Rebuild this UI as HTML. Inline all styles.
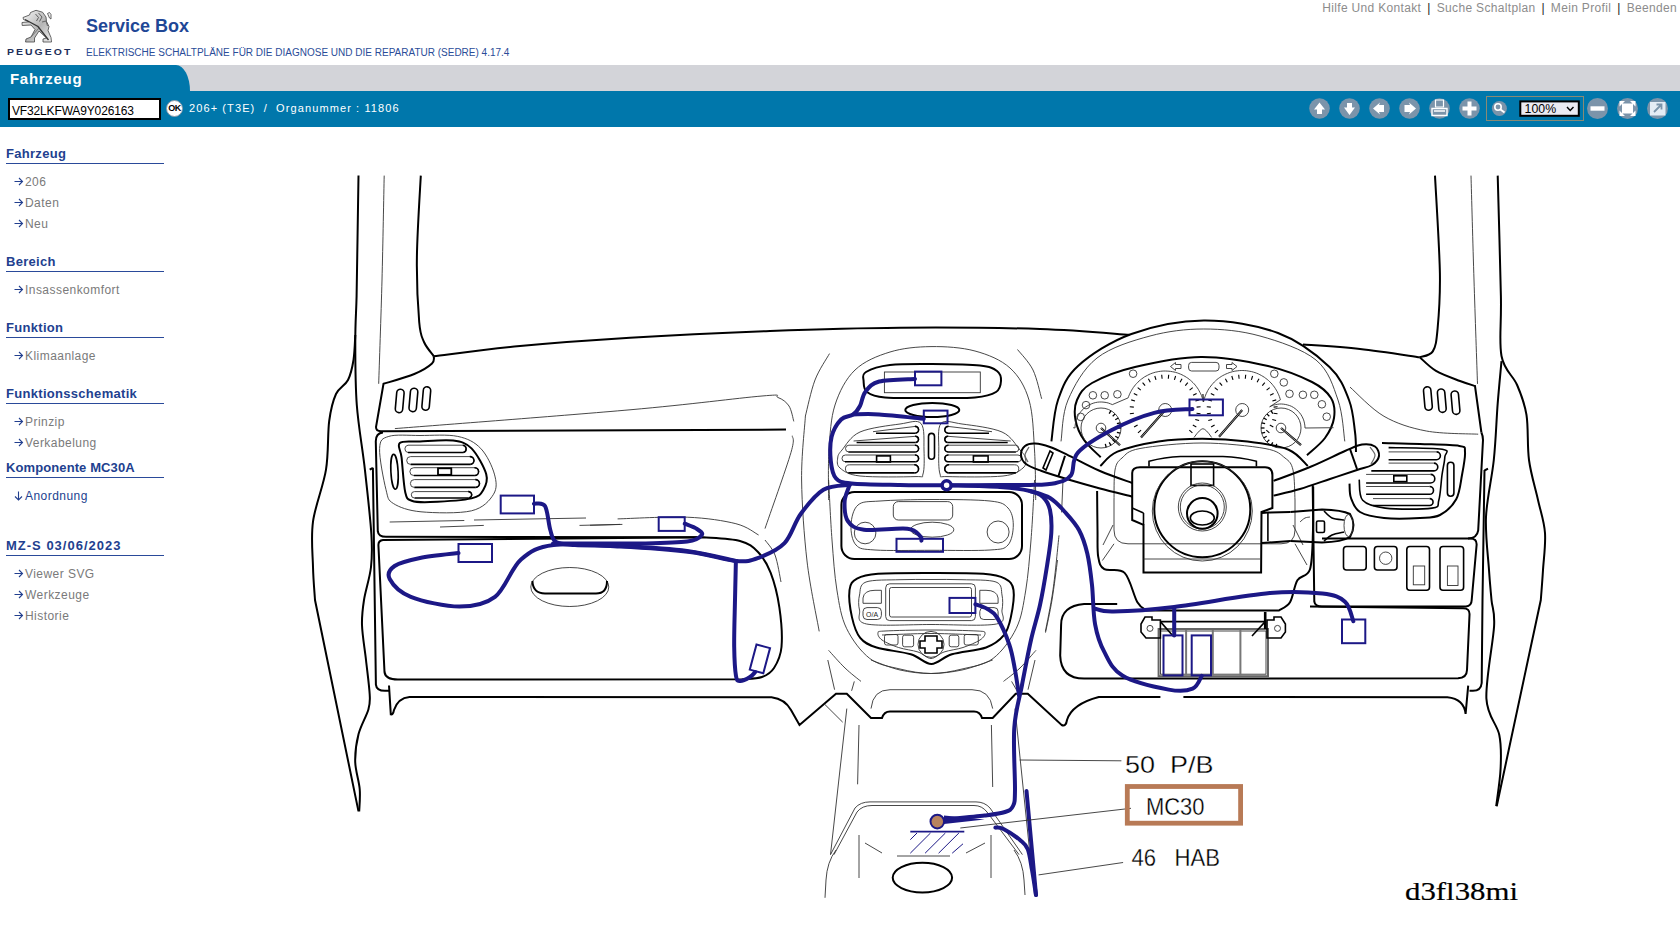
<!DOCTYPE html>
<html><head><meta charset="utf-8">
<style>
*{margin:0;padding:0;box-sizing:border-box}
html,body{width:1680px;height:925px;overflow:hidden;background:#fff;font-family:"Liberation Sans",sans-serif}
.abs{position:absolute;white-space:nowrap}
#toplinks{position:absolute;top:1px;right:3px;font-size:12px;color:#8c8c8c;letter-spacing:0.33px;line-height:15px}
#toplinks b{color:#222;font-weight:normal;margin:0 6px}
#title{left:86px;top:16px;font-size:18px;font-weight:bold;color:#1f4796}
#subtitle{left:86px;top:47px;font-size:10px;color:#2a4c98}
#peugeot{left:6.5px;top:45.5px;font-size:9.5px;font-weight:bold;color:#1e2f5a;letter-spacing:1.85px;transform:scaleX(1.1);transform-origin:0 0}
#grey{position:absolute;left:0;top:65px;width:1680px;height:26px;background:#d3d4d9}
#tab{position:absolute;left:0;top:65px;width:190px;height:26px;background:#0077ab;border-top-right-radius:14px 26px}
#tabtxt{left:10px;top:70px;font-size:15px;font-weight:bold;color:#fff;letter-spacing:0.7px}
#bar{position:absolute;left:0;top:91px;width:1680px;height:36px;background:#0077ab}
#vin{position:absolute;left:8px;top:98px;width:153px;height:22px;border:2px solid #000;background:#fff;font-size:12px;padding:4px 0 0 2px;letter-spacing:-0.15px}
#ok{position:absolute;left:166px;top:100px;width:17px;height:17px;border-radius:50%;background:#fff;border:1px solid #8899aa;font-size:9px;font-weight:bold;color:#000;text-align:center;line-height:15px;letter-spacing:-0.5px}
#organ{left:189px;top:102px;font-size:11px;color:#fff;letter-spacing:1.1px}
.side{position:absolute;left:6px;width:158px}
.sh{position:absolute;left:6px;width:158px;font-size:13px;font-weight:bold;color:#223f8f;letter-spacing:0.3px;border-bottom:1px solid #2a4a9a;height:18px;line-height:15px}
.si{position:absolute;left:14px;font-size:12px;color:#7a7a7a;letter-spacing:0.45px;line-height:14px;white-space:nowrap}
.si span{display:inline-block;width:11px;color:#223f8f;letter-spacing:0}
</style></head><body>

<svg style="position:absolute;left:0;top:0;z-index:5" width="1680" height="130">
<g fill="#7b94aa">
<circle cx="1319.5" cy="108.5" r="10.3"/><circle cx="1349.5" cy="108.5" r="10.3"/><circle cx="1379.5" cy="108.5" r="10.3"/>
<circle cx="1409.5" cy="108.5" r="10.3"/><circle cx="1439.5" cy="108.5" r="10.3"/><circle cx="1469.5" cy="108.5" r="10.3"/>
<circle cx="1499.4" cy="108.5" r="7.5"/>
<circle cx="1597.5" cy="108.5" r="10.5"/><circle cx="1627.5" cy="108.5" r="10.5"/><circle cx="1657.5" cy="108.5" r="10.5"/>
</g>
<g fill="#fff">
<path d="M1319.5,102.5 L1325,109.5 L1322,109.5 L1322,114 L1317,114 L1317,109.5 L1314,109.5 Z"/>
<path d="M1349.5,115 L1355,107.5 L1352,107.5 L1352,103 L1347,103 L1347,107.5 L1344,107.5 Z"/>
<path d="M1373,108.5 L1380,102.5 L1379,105 L1384,105 L1384,112 L1379,112 L1380,114.5 Z"/>
<path d="M1416,108.5 L1409,102.5 L1410,105 L1404.5,105 L1404.5,112 L1410,112 L1409,114.5 Z"/>
<path d="M1435.5,100 L1443.5,100 L1443.5,107 L1435.5,107 Z" fill="none" stroke="#fff" stroke-width="1.2"/>
<path d="M1432,108.5 L1447,108.5 L1447,115.5 L1432,115.5 Z" fill="none" stroke="#fff" stroke-width="1.4"/>
<path d="M1434,111 L1445,111" stroke="#fff" stroke-width="1.5"/>
<path d="M1467.5,101.5 L1471.5,101.5 L1471.5,106.5 L1476.5,106.5 L1476.5,110.5 L1471.5,110.5 L1471.5,115.5 L1467.5,115.5 L1467.5,110.5 L1462.5,110.5 L1462.5,106.5 L1467.5,106.5 Z"/>
<circle cx="1498" cy="107" r="3.2" fill="none" stroke="#fff" stroke-width="1.6"/>
<path d="M1500.5,109.5 L1504.5,112.5" stroke="#fff" stroke-width="2"/>
<rect x="1590.5" y="106.3" width="14" height="4.4"/>
<path d="M1619.5,101 L1625,101 L1622.5,103.5 L1632.5,103.5 L1630,101 L1635.5,101 L1635.5,106.5 L1633,104 L1633,113 L1635.5,110.5 L1635.5,116 L1630,116 L1632.5,113.5 L1622.5,113.5 L1625,116 L1619.5,116 L1619.5,110.5 L1622,113 L1622,104 L1619.5,106.5 Z"/>
<rect x="1650" y="102" width="15.5" height="13.5" fill="#e4ecf4"/>
</g>
<path d="M1654,112 L1661.5,104.5 M1656.5,104.5 L1661.5,104.5 L1661.5,109.5" fill="none" stroke="#7b94aa" stroke-width="1.8"/>
<rect x="1486.5" y="96.5" width="97" height="24" fill="none" stroke="#8a8a74" stroke-width="1"/>
<rect x="1520.3" y="101.4" width="58.5" height="14.4" fill="#eaeaf2" stroke="#000" stroke-width="2"/>
<text x="1524.6" y="112.8" font-family="Liberation Sans" font-size="12" fill="#000" textLength="31.5" lengthAdjust="spacingAndGlyphs">100%</text>
<path d="M1567,107 L1570.2,110.5 L1573.5,107" fill="none" stroke="#000" stroke-width="1.4"/>
<!-- lion -->
<defs><linearGradient id="lg" x1="0" y1="0" x2="1" y2="1"><stop offset="0" stop-color="#fafafa"/><stop offset="0.55" stop-color="#b5b5b5"/><stop offset="1" stop-color="#eee"/></linearGradient></defs>
<path d="M23,17.5 L29.5,15 L30.5,12.5 L36,10.3 L42.5,12.2 L46,17 L46.5,21.5 L49,26.5 L48,30.5 L51,37.5 L51.5,42 L43,42 L43,39 L46.5,38 L39,31 L34.5,38 L34.5,42 L25.5,42 L26,39 L31,37 L35,29.5 L31,25 L22.2,25.5 L22,22.5 L29,21.8 L23.5,19.5 Z" fill="url(#lg)" stroke="#444" stroke-width="0.8"/>
<path d="M47.5,13.5 L49.5,12.5 L51,14.5 L51,19 L49.5,18 Z" fill="#eee" stroke="#444" stroke-width="0.8"/>
<path d="M25,19.5 L38,26.5 L48.5,40" fill="none" stroke="#333" stroke-width="1.3"/>
<path d="M31,37 L39,28" fill="none" stroke="#666" stroke-width="0.8"/>
<path d="M35.5,14 L38.5,17.5 L36.5,21 M38.5,13 L42,17 L39.5,21.5" fill="none" stroke="#555" stroke-width="0.9"/>
<path d="M42,22 L46,21 L47.5,26" fill="none" stroke="#555" stroke-width="0.8"/>
</svg>
<div id="toplinks">Hilfe Und Kontakt<b>|</b>Suche Schaltplan<b>|</b>Mein Profil<b>|</b>Beenden</div>
<div class="abs" id="title">Service Box</div>
<div class="abs" id="subtitle">ELEKTRISCHE SCHALTPLÄNE FÜR DIE DIAGNOSE UND DIE REPARATUR (SEDRE) 4.17.4</div>
<div class="abs" id="peugeot">PEUGEOT</div>
<div id="grey"></div><div id="tab"></div>
<div class="abs" id="tabtxt">Fahrzeug</div>
<div id="bar"></div>
<div id="vin">VF32LKFWA9Y026163</div>
<div id="ok">OK</div>
<div class="abs" id="organ">206+ (T3E)&nbsp; / &nbsp;Organummer : 11806</div>

<div class="sh" style="top:146px">Fahrzeug</div>
<div class="si" style="top:175px"><span><svg width="10" height="9" style="vertical-align:0px"><path d="M0.5,4.5 L8.5,4.5 M5,1 L8.5,4.5 L5,8" fill="none" stroke="#223f8f" stroke-width="1.1"/></svg></span>206</div>
<div class="si" style="top:196px"><span><svg width="10" height="9" style="vertical-align:0px"><path d="M0.5,4.5 L8.5,4.5 M5,1 L8.5,4.5 L5,8" fill="none" stroke="#223f8f" stroke-width="1.1"/></svg></span>Daten</div>
<div class="si" style="top:217px"><span><svg width="10" height="9" style="vertical-align:0px"><path d="M0.5,4.5 L8.5,4.5 M5,1 L8.5,4.5 L5,8" fill="none" stroke="#223f8f" stroke-width="1.1"/></svg></span>Neu</div>
<div class="sh" style="top:254px">Bereich</div>
<div class="si" style="top:283px"><span><svg width="10" height="9" style="vertical-align:0px"><path d="M0.5,4.5 L8.5,4.5 M5,1 L8.5,4.5 L5,8" fill="none" stroke="#223f8f" stroke-width="1.1"/></svg></span>Insassenkomfort</div>
<div class="sh" style="top:320px">Funktion</div>
<div class="si" style="top:349px"><span><svg width="10" height="9" style="vertical-align:0px"><path d="M0.5,4.5 L8.5,4.5 M5,1 L8.5,4.5 L5,8" fill="none" stroke="#223f8f" stroke-width="1.1"/></svg></span>Klimaanlage</div>
<div class="sh" style="top:386px">Funktionsschematik</div>
<div class="si" style="top:415px"><span><svg width="10" height="9" style="vertical-align:0px"><path d="M0.5,4.5 L8.5,4.5 M5,1 L8.5,4.5 L5,8" fill="none" stroke="#223f8f" stroke-width="1.1"/></svg></span>Prinzip</div>
<div class="si" style="top:436px"><span><svg width="10" height="9" style="vertical-align:0px"><path d="M0.5,4.5 L8.5,4.5 M5,1 L8.5,4.5 L5,8" fill="none" stroke="#223f8f" stroke-width="1.1"/></svg></span>Verkabelung</div>
<div class="sh" style="top:460px;letter-spacing:0.1px">Komponente MC30A</div>
<div class="si" style="top:489px;color:#223f8f"><span><svg width="10" height="10" style="vertical-align:-1px"><path d="M4.5,0.5 L4.5,9 M1,5.5 L4.5,9 L8,5.5" fill="none" stroke="#223f8f" stroke-width="1.1"/></svg></span>Anordnung</div>
<div class="sh" style="top:538px;letter-spacing:1px">MZ-S 03/06/2023</div>
<div class="si" style="top:567px"><span><svg width="10" height="9" style="vertical-align:0px"><path d="M0.5,4.5 L8.5,4.5 M5,1 L8.5,4.5 L5,8" fill="none" stroke="#223f8f" stroke-width="1.1"/></svg></span>Viewer SVG</div>
<div class="si" style="top:588px"><span><svg width="10" height="9" style="vertical-align:0px"><path d="M0.5,4.5 L8.5,4.5 M5,1 L8.5,4.5 L5,8" fill="none" stroke="#223f8f" stroke-width="1.1"/></svg></span>Werkzeuge</div>
<div class="si" style="top:609px"><span><svg width="10" height="9" style="vertical-align:0px"><path d="M0.5,4.5 L8.5,4.5 M5,1 L8.5,4.5 L5,8" fill="none" stroke="#223f8f" stroke-width="1.1"/></svg></span>Historie</div>

<svg id="dg" width="1680" height="925" viewBox="0 0 1680 925">
<path d="M358.5,175.6C358.3,186.3 357.8,219.9 357.5,240C357.2,260.1 357,279.3 356.6,296C356.2,312.7 355.3,321.8 355.3,340C355.3,358.2 355.2,383.4 356.8,405C358.4,426.6 362.5,448.1 364.9,469.7C367.3,491.3 370.4,518.4 371.4,534.6C372.4,550.8 372.2,556.1 371,567C369.8,577.9 365.5,590.3 364,600C362.5,609.7 361.7,615 362,625C362.3,635 364.7,648.4 366,660C367.3,671.6 369.3,686.2 369.7,694.5C370.1,702.8 370.3,702.9 368.4,709.5C366.5,716.1 360.7,725.6 358.5,734.3C356.3,743 355,752.6 355.2,761.7C355.4,770.8 359,780.7 359.7,789C360.4,797.3 359.3,807.7 359.2,811.4" fill="none" stroke="#000" stroke-width="2"/>
<path d="M355.3,335C355,339.2 354.7,352.5 353.5,360C352.3,367.5 350.9,374.3 348,380C345.1,385.7 339.1,387.2 336,394C332.9,400.8 330.9,408.4 329.2,421C327.5,433.6 328.7,452.9 326,469.7C323.3,486.5 315.2,505.4 313,521.6C310.8,537.8 312.7,553.9 313,567C313.3,580.1 314.7,594.5 315,600L358.5,811.4" fill="none" stroke="#000" stroke-width="2"/>
<path d="M384.2,175.6C383.8,193 382.9,245.3 382,280C381.1,314.7 379.2,366.5 378.7,383.8" fill="none" stroke="#333" stroke-width="0.9"/>
<path d="M420.8,175.6C420.1,189.2 417.2,232.9 416.9,257.3C416.6,281.7 418,307.9 419.2,322C420.4,336.1 421.6,336.3 424,342C426.4,347.7 432.2,353.8 433.8,356.2" fill="none" stroke="#000" stroke-width="2"/>
<path d="M433.8,356.2C448.2,354.5 487.3,349.1 520,346C552.7,342.9 588.3,340.2 630,337.7C671.7,335.2 725,332.7 770,331C815,329.3 855,328 900,327.7C945,327.4 1001.8,327.8 1040,329C1078.2,330.2 1114.6,333.8 1129.5,334.8" fill="none" stroke="#000" stroke-width="2"/>
<path d="M433.8,356.2C433.5,357.4 435.2,360.5 432,363.5C428.8,366.5 422.4,370.6 414.3,374C406.2,377.4 388.6,382.2 383.5,383.8 L376,427 Q376,431.2 381,431.2 L786,429.6" fill="none" stroke="#000" stroke-width="2"/>
<path d="M394.9,428.6C434.1,425.5 568.8,415.2 630,409.8C691.2,404.4 737.3,398.1 762,396C786.7,393.9 773.5,395.8 778,397.5C782.5,399.2 786.4,402 789,406C791.6,410 793,418.8 793.8,421.4" fill="none" stroke="#333" stroke-width="0.9"/>
<path d="M792.3,435.7C792.1,438.5 795.5,436.9 791,452.4C786.5,467.9 769.3,515.9 765,528.6" fill="none" stroke="#333" stroke-width="0.9"/>
<rect x="396" y="389.2" width="7.4" height="23.5" rx="3.7" fill="none" stroke="#000" stroke-width="1.6" transform="rotate(5 399.7 401)"/>
<rect x="409.7" y="388.2" width="7.4" height="23.5" rx="3.7" fill="none" stroke="#000" stroke-width="1.6" transform="rotate(5 413.4 400)"/>
<rect x="422.6" y="386.8" width="7.4" height="23.5" rx="3.7" fill="none" stroke="#000" stroke-width="1.6" transform="rotate(5 426.3 398.5)"/>
<path d="M383,432.5 Q375.5,433 375.8,442 L377.8,531.4 Q378.5,536.8 386,536.8 L697,537.3" fill="none" stroke="#000" stroke-width="2"/>
<path d="M379.6,448.4C380.1,439.5 382.1,438.5 388.8,436.4C395.5,434.2 408.5,435.5 420,435.5C431.5,435.5 447.6,434.2 457.7,436.4C467.8,438.5 474.6,442.1 480.7,448.4C486.8,454.7 492.3,466.5 494.4,474.1C496.5,481.8 497.3,488.2 493.5,494.3C489.7,500.4 483.6,507.9 471.5,510.8C459.4,513.7 434,513 421,511.8C408,510.6 399.2,507.2 393.4,503.5C387.6,499.8 388.3,498.9 386,489.7C383.7,480.5 379.1,457.3 379.6,448.4Z" fill="none" stroke="#333" stroke-width="0.9"/>
<path d="M399.8,442.9C402.9,440.2 411.1,441.9 420,441.5C428.9,441.1 444.5,439.5 453.1,440.6C461.7,441.8 466,442.8 471.5,448.4C477,454 484.2,467.2 486.2,474.1C488.2,481 485.8,485.6 483.4,489.7C480.9,493.8 480.4,496.3 471.5,498.4C462.6,500.5 440.1,501.7 430.1,502.1C420.1,502.5 415.8,502.3 411.7,500.7C407.6,499.1 407,499.7 405.3,492.5C403.6,485.3 402.5,465.9 401.6,457.6C400.7,449.3 396.7,445.6 399.8,442.9Z" fill="none" stroke="#000" stroke-width="2"/>
<path d="M408,445.2 L463.2,445.2 A3.7,3.7 0 0 1 463.2,452.5" fill="none" stroke="#333" stroke-width="0.9"/>
<path d="M408,452.5 A3.7,3.7 0 0 1 408,445.2" fill="none" stroke="#333" stroke-width="0.9"/>
<path d="M408,452.5 L463.2,452.5" fill="none" stroke="#000" stroke-width="1.6"/>
<path d="M463.2,452.5 A3.7,3.7 0 0 0 462.8,445.2" fill="none" stroke="#000" stroke-width="1.6"/>
<path d="M410.6,456.6 L470.3,456.6 A3.9,3.9 0 0 1 470.3,464.4" fill="none" stroke="#333" stroke-width="0.9"/>
<path d="M410.6,464.4 A3.9,3.9 0 0 1 410.6,456.6" fill="none" stroke="#333" stroke-width="0.9"/>
<path d="M410.6,464.4 L470.3,464.4" fill="none" stroke="#000" stroke-width="1.6"/>
<path d="M470.3,464.4 A3.9,3.9 0 0 0 469.8,456.6" fill="none" stroke="#000" stroke-width="1.6"/>
<path d="M413.8,467.7 L474.9,467.7 A3.9,3.9 0 0 1 474.9,475.5" fill="none" stroke="#333" stroke-width="0.9"/>
<path d="M413.8,475.5 A3.9,3.9 0 0 1 413.8,467.7" fill="none" stroke="#333" stroke-width="0.9"/>
<path d="M413.8,475.5 L474.9,475.5" fill="none" stroke="#000" stroke-width="1.6"/>
<path d="M474.9,475.5 A3.9,3.9 0 0 0 474.4,467.7" fill="none" stroke="#000" stroke-width="1.6"/>
<path d="M414.3,479.6 L475.8,479.6 A3.9,3.9 0 0 1 475.8,487.4" fill="none" stroke="#333" stroke-width="0.9"/>
<path d="M414.3,487.4 A3.9,3.9 0 0 1 414.3,479.6" fill="none" stroke="#333" stroke-width="0.9"/>
<path d="M414.3,487.4 L475.8,487.4" fill="none" stroke="#000" stroke-width="1.6"/>
<path d="M475.8,487.4 A3.9,3.9 0 0 0 475.3,479.6" fill="none" stroke="#000" stroke-width="1.6"/>
<path d="M414.5,491.6 L468.7,491.6 A3.2,3.2 0 0 1 468.7,498" fill="none" stroke="#333" stroke-width="0.9"/>
<path d="M414.5,498 A3.2,3.2 0 0 1 414.5,491.6" fill="none" stroke="#333" stroke-width="0.9"/>
<path d="M414.5,498 L468.7,498" fill="none" stroke="#000" stroke-width="1.6"/>
<path d="M468.7,498 A3.2,3.2 0 0 0 468.2,491.6" fill="none" stroke="#000" stroke-width="1.6"/>
<rect x="438" y="468.3" width="13.3" height="6.5" rx="0" fill="#fff" stroke="#000" stroke-width="1.8"/>
<ellipse cx="394.5" cy="471.8" rx="3.6" ry="17.4" fill="none" stroke="#000" stroke-width="1.6" transform="rotate(-3 394.5 471.8)"/>
<path d="M389.7,522 L464.3,520.5" fill="none" stroke="#333" stroke-width="0.9"/>
<path d="M440,527 L483.8,525.4" fill="none" stroke="#333" stroke-width="0.9"/>
<path d="M474,520 L586,518" fill="none" stroke="#333" stroke-width="0.9"/>
<path d="M579.5,525.4 L620,524.4" fill="none" stroke="#333" stroke-width="0.9"/>
<path d="M590,525.3 L622.4,524.4" fill="none" stroke="#333" stroke-width="0.9"/>
<path d="M617.6,518.9C629.2,518.6 667.5,516.4 687.2,517.2C706.9,518 724,520.7 735.9,523.7C747.8,526.7 754.8,533.1 758.6,535" fill="none" stroke="#333" stroke-width="0.9"/>
<path d="M378.4,545 L384.5,672 Q385.5,679.5 397.8,679.5 L742.4,679.3 C745.7,678.9 756.7,678.9 762,677C767.3,675.1 770.8,673 774,668C777.2,663 780.6,657.1 781.5,647C782.4,636.9 781.2,620 779.4,607.6C777.6,595.2 774.2,581.9 770.6,572.6C767,563.3 763.1,557.3 758,552C752.9,546.7 749.1,543.5 740,541C730.9,538.5 709.6,537.9 703.5,537.3 L383,540 Q378.4,540.5 378.4,545" fill="none" stroke="#000" stroke-width="2"/>
<path d="M765,540C766.7,542.5 772.3,548 775,555C777.7,562 780,577.5 781,582" fill="none" stroke="#333" stroke-width="0.9"/>
<path d="M369.7,469.7 L372.9,467.8 M372.9,467.8 L375.9,684.6 Q376.5,690.8 385,690.8 L389,690.8" fill="none" stroke="#000" stroke-width="2"/>
<path d="M389,685.5 L390.8,714.4 Q393,715 394,710 Q398,698 409.5,697 L771.5,697.2 Q785,699 791,710 L799.5,724.9 L836,693.8 L846.8,693.8 L871,718 L882,718 Q884,711.4 890,711.4 L974,711.4 Q980,711.4 982,718 L992.7,718 L1015.7,693.8 L1027.8,693.8 L1061.6,725 Q1066,727 1067,720 Q1072,704 1098.8,697 L1160.4,697 M1183.4,697 L1447.4,697.3 Q1464,699 1465.6,714 L1468.2,685.6" fill="none" stroke="#000" stroke-width="2"/>
<ellipse cx="569.8" cy="587" rx="39" ry="19.5" fill="none" stroke="#333" stroke-width="0.9" transform="rotate(0 569.8 587)"/>
<path d="M532.4,581 Q533,593.5 545,593.5 L596,593.5 Q607,593.5 607,581" fill="none" stroke="#000" stroke-width="2"/>
<path d="M829.5,353.6C827.1,358 819,369.6 815,380C811,390.4 807,410 805.4,416" fill="none" stroke="#333" stroke-width="0.9"/>
<path d="M1017.5,349.5C1020.1,352.9 1029,361.8 1033,370C1037,378.2 1040.2,394 1041.7,398.8" fill="none" stroke="#333" stroke-width="0.9"/>
<path d="M828.6,500C828.7,491.7 827.9,465.8 829,450C830.1,434.2 830.7,418.3 835,405C839.3,391.7 845.8,378.8 855,370C864.2,361.2 877.3,355.9 890,352C902.7,348.1 916.8,346.8 931,346.6C945.2,346.4 961.8,347.4 975,351C988.2,354.6 1001,359.8 1010,368C1019,376.2 1024.9,386.3 1029,400C1033.1,413.7 1033.4,433.3 1034.5,450C1035.6,466.7 1035.5,491.7 1035.7,500" fill="none" stroke="#333" stroke-width="0.9"/>
<path d="M866,372C870.4,369.3 879,366.3 890,365C901,363.7 917,363.9 932,364C947,364.1 969.2,364.3 980,365.5C990.8,366.7 993.5,368.4 997,371C1000.5,373.6 1001.2,377.5 1001,381C1000.8,384.5 1000.3,389.2 996,392C991.7,394.8 985.7,396.5 975,397.5C964.3,398.5 947,397.9 932,397.9C917,397.9 895.8,398.5 885,397.5C874.2,396.5 870.6,394.8 867,392C863.4,389.2 863.8,384.3 863.6,381C863.4,377.7 861.6,374.7 866,372Z" fill="none" stroke="#000" stroke-width="2"/>
<rect x="884.4" y="372" width="95.9" height="20.7" rx="0" fill="none" stroke="#333" stroke-width="0.9"/>
<ellipse cx="932.3" cy="410" rx="27" ry="7" fill="none" stroke="#000" stroke-width="2" transform="rotate(0 932.3 410)"/>
<path d="M842,450C845.7,445.7 850.3,436.3 860,432C869.7,427.7 889.8,425.4 900,424C910.2,422.6 917,419.2 921,423.5C925,427.8 923.7,441.6 924,450C924.3,458.4 924.5,469.6 923,474C921.5,478.4 925.5,476.3 915,476.6C904.5,476.9 872.5,477.4 860,476C847.5,474.6 843.7,471 840,468C836.3,465 837.4,461 837.7,458C838,455 838.3,454.3 842,450Z" fill="none" stroke="#333" stroke-width="0.9"/>
<path d="M1020,450C1016.1,445.7 1011.7,436.3 1002,432C992.3,427.7 972.2,425.4 962,424C951.8,422.6 944.9,419.2 941,423.5C937.1,427.8 939,441.6 938.8,450C938.6,458.4 938.5,469.6 940,474C941.5,478.4 937.5,476.3 948,476.6C958.5,476.9 990.5,477.4 1003,476C1015.5,474.6 1019.3,471 1023,468C1026.7,465 1025.8,461 1025.3,458C1024.8,455 1023.9,454.3 1020,450Z" fill="none" stroke="#333" stroke-width="0.9"/>
<path d="M873,431.7 L915.4,426.4 A3.4,3.4 0 0 1 915.4,433.2" fill="none" stroke="#333" stroke-width="0.9"/>
<path d="M876,433.2 L915.4,433.2" fill="none" stroke="#000" stroke-width="1.6"/>
<path d="M915.4,433.2 A3.4,3.4 0 0 0 914.9,426.4" fill="none" stroke="#000" stroke-width="1.6"/>
<path d="M853.6,441 L915.6,436.3 A3.1,3.1 0 0 1 915.6,442.5" fill="none" stroke="#333" stroke-width="0.9"/>
<path d="M856.6,442.5 L915.6,442.5" fill="none" stroke="#000" stroke-width="1.6"/>
<path d="M915.6,442.5 A3.1,3.1 0 0 0 915.1,436.3" fill="none" stroke="#000" stroke-width="1.6"/>
<path d="M848.9,445.2 L915.4,445.2 A3.4,3.4 0 0 1 915.4,452" fill="none" stroke="#333" stroke-width="0.9"/>
<path d="M848.9,445.2 A3.4,3.4 0 0 0 848.9,452" fill="none" stroke="#333" stroke-width="0.9"/>
<path d="M848.5,452 L915.4,452" fill="none" stroke="#000" stroke-width="1.6"/>
<path d="M915.4,452 A3.4,3.4 0 0 0 914.9,445.2" fill="none" stroke="#000" stroke-width="1.6"/>
<path d="M845.4,455 L915.4,455 A3.4,3.4 0 0 1 915.4,461.8" fill="none" stroke="#333" stroke-width="0.9"/>
<path d="M845.4,455 A3.4,3.4 0 0 0 845.4,461.8" fill="none" stroke="#333" stroke-width="0.9"/>
<path d="M845,461.8 L915.4,461.8" fill="none" stroke="#000" stroke-width="1.6"/>
<path d="M915.4,461.8 A3.4,3.4 0 0 0 914.9,455" fill="none" stroke="#000" stroke-width="1.6"/>
<path d="M849.5,464.8 L914.7,464.8 A4,4 0 0 1 914.7,472.9" fill="none" stroke="#333" stroke-width="0.9"/>
<path d="M849.5,464.8 A4,4 0 0 0 849.5,472.9" fill="none" stroke="#333" stroke-width="0.9"/>
<path d="M848.5,472.9 L914.7,472.9" fill="none" stroke="#000" stroke-width="1.6"/>
<path d="M914.7,472.9 A4,4 0 0 0 914.2,464.8" fill="none" stroke="#000" stroke-width="1.6"/>
<path d="M992,431.7 L948,426.4 A3.4,3.4 0 0 0 948,433.2" fill="none" stroke="#333" stroke-width="0.9"/>
<path d="M948,433.2 L989,433.2" fill="none" stroke="#000" stroke-width="1.6"/>
<path d="M948,433.2 A3.4,3.4 0 0 1 948.5,426.4" fill="none" stroke="#000" stroke-width="1.6"/>
<path d="M1010.7,441 L947.7,436.3 A3.1,3.1 0 0 0 947.7,442.5" fill="none" stroke="#333" stroke-width="0.9"/>
<path d="M947.7,442.5 L1007.7,442.5" fill="none" stroke="#000" stroke-width="1.6"/>
<path d="M947.7,442.5 A3.1,3.1 0 0 1 948.2,436.3" fill="none" stroke="#000" stroke-width="1.6"/>
<path d="M948,445.2 L1015.4,445.2 A3.4,3.4 0 0 1 1015.4,452" fill="none" stroke="#333" stroke-width="0.9"/>
<path d="M948,445.2 A3.4,3.4 0 0 0 948,452" fill="none" stroke="#333" stroke-width="0.9"/>
<path d="M948,452 L1015.8,452" fill="none" stroke="#000" stroke-width="1.6"/>
<path d="M948,452 A3.4,3.4 0 0 1 948.5,445.2" fill="none" stroke="#000" stroke-width="1.6"/>
<path d="M948,455 L1018,455 A3.4,3.4 0 0 1 1018,461.8" fill="none" stroke="#333" stroke-width="0.9"/>
<path d="M948,455 A3.4,3.4 0 0 0 948,461.8" fill="none" stroke="#333" stroke-width="0.9"/>
<path d="M948,461.8 L1018.4,461.8" fill="none" stroke="#000" stroke-width="1.6"/>
<path d="M948,461.8 A3.4,3.4 0 0 1 948.5,455" fill="none" stroke="#000" stroke-width="1.6"/>
<path d="M948.6,464.8 L1014.7,464.8 A4,4 0 0 1 1014.7,472.9" fill="none" stroke="#333" stroke-width="0.9"/>
<path d="M948.6,464.8 A4,4 0 0 0 948.6,472.9" fill="none" stroke="#333" stroke-width="0.9"/>
<path d="M948.6,472.9 L1015.8,472.9" fill="none" stroke="#000" stroke-width="1.6"/>
<path d="M948.6,472.9 A4,4 0 0 1 949.1,464.8" fill="none" stroke="#000" stroke-width="1.6"/>
<rect x="876.6" y="455.9" width="13.8" height="6.1" rx="0" fill="none" stroke="#000" stroke-width="1.6"/>
<rect x="973.4" y="455.9" width="14.7" height="6.1" rx="0" fill="none" stroke="#000" stroke-width="1.6"/>
<rect x="928.5" y="433.4" width="6" height="25.9" rx="3" fill="none" stroke="#000" stroke-width="1.6"/>
<rect x="841.4" y="491.9" width="180.6" height="67.1" rx="13" fill="none" stroke="#000" stroke-width="2"/>
<path d="M858,505C862.8,501 867.7,501.9 880,501C892.3,500.1 913.7,499.5 932,499.5C950.3,499.5 977.3,499.6 990,501C1002.7,502.4 1004.1,504 1008,508C1011.9,512 1013.3,518.8 1013.3,525C1013.3,531.2 1011.9,540.8 1008,545C1004.1,549.2 1002.7,549.1 990,550C977.3,550.9 951.2,550.3 932,550.3C912.8,550.3 887.7,550.9 875,550C862.3,549.1 860,549.2 856,545C852,540.8 850.7,531.7 851,525C851.3,518.3 853.2,509 858,505Z" fill="none" stroke="#333" stroke-width="0.9"/>
<rect x="893.3" y="501.6" width="59.4" height="18.4" rx="5" fill="none" stroke="#333" stroke-width="0.9"/>
<ellipse cx="932.2" cy="529.7" rx="21.6" ry="7.5" fill="none" stroke="#333" stroke-width="0.9" transform="rotate(0 932.2 529.7)"/>
<circle cx="865.1" cy="533" r="10.8" fill="none" stroke="#333" stroke-width="0.9"/>
<circle cx="998.1" cy="532" r="11" fill="none" stroke="#333" stroke-width="0.9"/>
<path d="M849.5,590C848.7,596.5 850.2,609.4 852,617.4C853.8,625.4 856.1,632.9 860.2,637.9C864.3,642.9 868.2,644.8 876.6,647.5C885,650.2 901.7,651.5 910.8,654.3C919.9,657 924.5,664 931.4,664C938.2,664 942.8,657 951.9,654.3C961,651.5 977.4,650.7 986.1,647.5C994.8,644.3 999.8,640.2 1003.9,635.2C1008,630.2 1009.2,624.9 1010.8,617.4C1012.4,609.9 1014.5,596.5 1013.5,590C1012.5,583.5 1010,581.3 1005,578.6C1000,575.9 995.7,574.7 983.4,573.8C971.1,572.9 948.6,573 931,573C913.4,573 890.3,572.9 878,573.8C865.7,574.7 861.8,575.9 857,578.6C852.2,581.3 850.3,583.5 849.5,590Z" fill="none" stroke="#000" stroke-width="2"/>
<path d="M866,582C872.8,579.5 889.2,580.1 900,579.7C910.8,579.3 920.7,579.5 931,579.5C941.3,579.5 951.2,579.3 962,579.7C972.8,580.1 989.3,579.5 996,582C1002.7,584.5 1001,590.3 1002,595C1003,599.7 1002.9,605.2 1002,610C1001.1,614.8 1008.2,621.6 996.4,624C984.6,626.4 952.6,624.5 931,624.5C909.4,624.5 878.5,626.4 866.6,624C854.7,621.6 860.7,614.8 859.5,610C858.3,605.2 858.4,599.7 859.5,595C860.6,590.3 859.2,584.5 866,582Z" fill="none" stroke="#333" stroke-width="0.9"/>
<rect x="885.7" y="583.8" width="89.7" height="36.8" rx="4" fill="none" stroke="#333" stroke-width="0.9"/>
<rect x="889.5" y="587.5" width="82" height="29.5" rx="2" fill="none" stroke="#333" stroke-width="0.9"/>
<path d="M863,603.3 L863,598 Q864,590.3 875,590.3 L881.4,590.3 L881.4,603.3 Z" fill="none" stroke="#333" stroke-width="0.9"/>
<rect x="863" y="607.6" width="18.4" height="11.9" rx="4" fill="none" stroke="#333" stroke-width="0.9"/>
<path d="M998.1,603.3 L998.1,598 Q997,590.3 986,590.3 L979.8,590.3 L979.8,603.3 Z" fill="none" stroke="#333" stroke-width="0.9"/>
<rect x="979.8" y="607.6" width="18.3" height="11.9" rx="4" fill="none" stroke="#333" stroke-width="0.9"/>
<text x="866" y="617" font-family="Liberation Sans" font-size="7" fill="#222">O/A</text>
<path d="M878,633C878.5,631.5 876.2,631.5 885,631C893.8,630.5 915.7,630 931,630C946.3,630 968,630.5 977,631C986,631.5 984.5,631.5 985,633C985.5,634.5 983.7,637.6 980,640C976.3,642.4 969,645.5 963,647.5C957,649.5 949.3,650.2 944,652C938.7,653.8 935.3,658.5 931,658.5C926.7,658.5 923.4,653.8 918,652C912.6,650.2 904.5,649.5 898.5,647.5C892.5,645.5 885.4,642.4 882,640C878.6,637.6 877.5,634.5 878,633Z" fill="none" stroke="#333" stroke-width="0.9"/>
<path d="M882,635C890.2,634.8 914.5,633.5 931,633.5C947.5,633.5 972.7,634.8 981,635" fill="none" stroke="#333" stroke-width="0.9"/>
<circle cx="931" cy="644.4" r="13" fill="none" stroke="#333" stroke-width="0.9"/>
<path d="M925,636 L937,636 L937,641 L942,641 L942,648 L937,648 L937,653 L925,653 L925,648 L920,648 L920,641 L925,641 Z" fill="none" stroke="#000" stroke-width="1.6"/>
<rect x="884.5" y="634.5" width="13.5" height="10.5" rx="2" fill="none" stroke="#333" stroke-width="0.9"/>
<rect x="902.6" y="635.2" width="11" height="11.6" rx="2" fill="none" stroke="#333" stroke-width="0.9"/>
<rect x="949.2" y="635.2" width="9.6" height="11.6" rx="2" fill="none" stroke="#333" stroke-width="0.9"/>
<rect x="964.2" y="634.5" width="14.1" height="10.5" rx="2" fill="none" stroke="#333" stroke-width="0.9"/>
<path d="M828.6,480C829.2,490 830.6,521.7 832,540C833.4,558.3 834.5,575.3 836.9,590C839.3,604.7 841,616.9 846.5,628.3C852,639.7 860.9,651.7 869.8,658.5C878.7,665.3 889.7,666.5 900,669C910.3,671.5 921.1,673.5 931.4,673.5C941.7,673.5 951.7,671.5 962,669C972.3,666.5 984,665.3 993,658.5C1002,651.7 1010.8,639.7 1016.3,628.3C1021.8,616.9 1023.3,604.7 1025.8,590C1028.2,575.3 1029.5,558.3 1031,540C1032.5,521.7 1034,490 1034.6,480" fill="none" stroke="#333" stroke-width="0.9"/>
<path d="M828.6,650.3C831.3,653.2 839.6,662.8 845,668C850.4,673.2 858.3,679.2 861,681.4" fill="none" stroke="#333" stroke-width="0.9"/>
<path d="M1036,650.3C1033.3,653.2 1025.4,662.8 1020,668C1014.6,673.2 1006.2,679.2 1003.5,681.4" fill="none" stroke="#333" stroke-width="0.9"/>
<path d="M805.4,416C804.8,426.7 801.3,455.8 801.6,480C801.9,504.2 804.1,535.8 807,561C809.9,586.2 817.2,619.7 819.2,631.4" fill="none" stroke="#333" stroke-width="0.9"/>
<path d="M1063,480 L1061.6,512.4" fill="none" stroke="#333" stroke-width="0.9"/>
<path d="M1059,535.4C1058,544.5 1055.3,574 1053,590C1050.7,606 1046.7,624.5 1045.4,631.4" fill="none" stroke="#333" stroke-width="0.9"/>
<path d="M871,660C875.8,661.7 890.1,667.8 900,670C909.9,672.2 920.2,673.5 930.5,673.5C940.8,673.5 951.6,672.2 962,670C972.4,667.8 987.6,661.7 992.7,660" fill="none" stroke="#333" stroke-width="0.9"/>
<path d="M827.8,660 L834.6,689.7M854.3,681.4 L851.6,690.8M1011.6,681.4 L1017,690.8" fill="none" stroke="#333" stroke-width="0.9"/>
<path d="M1035,660 L1028,689.7" fill="none" stroke="#333" stroke-width="0.9"/>
<path d="M825,704.6 L842.7,722.2" fill="none" stroke="#333" stroke-width="0.9"/>
<path d="M846.8,708.6 L830.5,854.6" fill="none" stroke="#333" stroke-width="0.9"/>
<path d="M1015,708.6 L1030,854.6" fill="none" stroke="#333" stroke-width="0.9"/>
<path d="M871,708.6 Q873,689.7 890,689.7 L972,689.7 Q990,689.7 992.7,708.6" fill="none" stroke="#333" stroke-width="0.9"/>
<path d="M859,725 L857.6,784.3" fill="none" stroke="#333" stroke-width="0.9"/>
<path d="M991.4,725 L992.7,787" fill="none" stroke="#333" stroke-width="0.9"/>
<path d="M830.5,854.6 L855,808 Q860.3,801.9 870,801.9 L976,801.9 Q984.6,801.9 990,808 L1022.4,854.6" fill="none" stroke="#333" stroke-width="0.9"/>
<path d="M834,854.6 L857,812 Q862,805.5 872,805.5 L974,805.5 Q982,805.5 987,812 L1019,854.6" fill="none" stroke="#333" stroke-width="0.9"/>
<path d="M825,897.8 L826,880 Q827,862 836,850 M1025,895 L1024,880 Q1023,862 1014,850" fill="none" stroke="#333" stroke-width="0.9"/>
<path d="M859,835 L859,878M991,835 L991,878" fill="none" stroke="#333" stroke-width="0.9"/>
<path d="M865,843 L882,853M897,856 L950,856M966,853 L985,843" fill="none" stroke="#333" stroke-width="0.9"/>
<ellipse cx="922.4" cy="877.6" rx="29.7" ry="14.9" fill="none" stroke="#000" stroke-width="2" transform="rotate(0 922.4 877.6)"/>
<path d="M1051.4,441.4C1052.5,434.5 1053.6,412.6 1058,400C1062.4,387.4 1065.8,377 1078,366C1090.2,355 1110.4,341.6 1131.4,334C1152.4,326.4 1179.4,320.7 1203.8,320.5C1228.2,320.3 1257,325.2 1278,333C1299,340.8 1317.7,355.8 1329.5,367C1341.3,378.2 1344.8,389.2 1349,400C1353.2,410.8 1353.8,423.3 1355,432C1356.2,440.7 1355.8,448.7 1356,452" fill="none" stroke="#000" stroke-width="2"/>
<path d="M1061,441.4C1062.2,434.5 1062,413.9 1068,400C1074,386.1 1083.3,368.7 1097,358C1110.7,347.3 1132.2,340.8 1150,336C1167.8,331.2 1185.5,329 1203.8,329C1222.1,329 1241.3,330.8 1260,336C1278.7,341.2 1303,349.3 1316,360C1329,370.7 1333.2,386.4 1338,400C1342.8,413.6 1343.7,434.5 1344.8,441.4" fill="none" stroke="#333" stroke-width="0.9"/>
<path d="M1100.7,457.2C1097.9,454.3 1088.2,446.2 1084,440C1079.8,433.8 1076.7,426.7 1075.5,420C1074.3,413.3 1074.2,406.2 1077,400C1079.8,393.8 1082.3,388.5 1092,383C1101.7,377.5 1116.8,371.3 1135,367C1153.2,362.7 1178.8,357.2 1201,357C1223.2,356.8 1249.5,361.8 1268,366C1286.5,370.2 1301.5,376.7 1312,382C1322.5,387.3 1327.3,392 1331,398C1334.7,404 1335,411.3 1334,418C1333,424.7 1329.5,431.8 1325,438C1320.5,444.2 1310,452.3 1307,455.2" fill="none" stroke="#000" stroke-width="2"/>
<path d="M1073.2,427.7 L1075,428 L1075.1,425.8 L1075.4,423.6 L1075.8,421.5 L1076.5,419.4 L1077.3,417.4 L1078.3,415.4 L1079.4,413.5 L1080.7,411.8 L1082.1,410.1 L1083.7,408.6 L1085.4,407.2 L1087.2,406 L1089.1,404.9 L1091.1,404 L1093.2,403.2 L1095.3,402.6 L1097.5,402.2 L1099.6,402 L1101.8,402 L1104,402.2 L1106.2,402.5 L1108.3,403 L1110.4,403.8 L1112.4,404.6 L1128.1,397.9 L1128.7,396.3 L1129.3,394.8 L1130,393.2 L1130.8,391.7 L1131.6,390.2 L1132.5,388.8 L1133.4,387.4 L1134.5,386 L1135.5,384.7 L1136.7,383.4 L1137.9,382.2 L1139.1,381 L1140.4,379.9 L1141.7,378.9 L1143.1,377.9 L1144.5,376.9 L1146,376.1 L1147.5,375.3 L1149,374.5 L1150.6,373.8 L1152.2,373.2 L1153.8,372.7 L1155.4,372.2 L1157.1,371.9 L1158.8,371.5 L1160.4,371.3 L1162.1,371.1 L1163.8,371 L1165.5,371 L1167.2,371.1 L1168.9,371.2 L1170.6,371.4 L1172.3,371.7 L1174,372 L1175.6,372.4 L1177.3,372.9 L1178.9,373.5 L1180.4,374.1 L1182,374.8 L1183.5,375.6 L1185,376.4 L1186.4,377.3 L1187.8,378.2 L1189.2,379.3 L1190.5,380.3 L1191.8,381.5 L1193,382.7 L1194.2,383.9 L1195.3,385.2 L1196.3,386.5 L1197.3,387.9 L1198.3,389.3 L1199.1,390.8 L1199.9,392.3 L1200.7,393.8 L1201.4,395.4 L1202,397 L1202.5,398.6 L1203,400.2 L1203.3,401.9 L1202.9,394 L1203.6,401.8 L1204,400.1 L1204.4,398.4 L1205,396.7 L1205.6,395.1 L1206.3,393.5 L1207.1,391.9 L1207.9,390.3 L1208.8,388.8 L1209.8,387.4 L1210.9,386 L1212,384.6 L1213.1,383.3 L1214.3,382 L1215.6,380.8 L1216.9,379.6 L1218.3,378.5 L1219.7,377.5 L1221.2,376.5 L1222.7,375.6 L1224.3,374.8 L1225.9,374 L1227.5,373.4 L1229.1,372.7 L1230.8,372.2 L1232.5,371.7 L1234.2,371.3 L1235.9,371 L1237.7,370.8 L1239.4,370.6 L1241.2,370.5 L1242.9,370.5 L1244.7,370.6 L1246.4,370.7 L1248.2,371 L1249.9,371.3 L1251.6,371.6 L1253.3,372.1 L1255,372.6 L1256.6,373.2 L1258.3,373.9 L1259.9,374.7 L1261.4,375.5 L1262.9,376.4 L1264.4,377.3 L1265.8,378.4 L1267.2,379.4 L1268.6,380.6 L1269.8,381.8 L1271.1,383 L1272.2,384.3 L1273.3,385.7 L1274.4,387.1 L1275.4,388.6 L1276.3,390.1 L1277.2,391.6 L1277.9,393.2 L1278.7,394.8 L1279.3,396.4 L1279.9,398.1 L1280.4,399.8 L1269.7,406.8 L1271.6,405.9 L1273.5,405.2 L1275.5,404.6 L1277.5,404.3 L1279.6,404 L1281.6,404 L1283.7,404.2 L1285.7,404.5 L1287.7,405 L1289.7,405.6 L1291.6,406.4 L1293.4,407.4 L1295.1,408.6 L1296.7,409.8 L1298.2,411.3 L1299.6,412.8 L1300.8,414.4 L1301.9,416.2 L1302.8,418 L1303.6,419.9 L1304.2,421.9 L1304.6,423.9 L1304.9,425.9 L1305,428 L1333.5,427.7" fill="none" stroke="#333" stroke-width="0.9"/>
<circle cx="1165.2" cy="410" r="6.5" fill="none" stroke="#333" stroke-width="0.9"/>
<path d="M1138,432.8 L1141.1,430.2" stroke="#000" stroke-width="1.1"/>
<path d="M1134.1,427 L1137.6,425.1" stroke="#000" stroke-width="1.1"/>
<path d="M1131.3,420.6 L1135.1,419.4" stroke="#000" stroke-width="1.1"/>
<path d="M1129.9,413.8 L1133.9,413.3" stroke="#000" stroke-width="1.1"/>
<path d="M1129.8,406.8 L1133.8,407.1" stroke="#000" stroke-width="1.1"/>
<path d="M1131.2,399.9 L1135,401" stroke="#000" stroke-width="1.1"/>
<path d="M1133.8,393.4 L1137.3,395.3" stroke="#000" stroke-width="1.1"/>
<path d="M1137.7,387.6 L1140.8,390.1" stroke="#000" stroke-width="1.1"/>
<path d="M1142.6,382.6 L1145.1,385.7" stroke="#000" stroke-width="1.1"/>
<path d="M1148.4,378.7 L1150.3,382.3" stroke="#000" stroke-width="1.1"/>
<path d="M1154.8,376 L1156,379.9" stroke="#000" stroke-width="1.1"/>
<path d="M1161.7,374.7 L1162.1,378.7" stroke="#000" stroke-width="1.1"/>
<path d="M1168.7,374.7 L1168.3,378.7" stroke="#000" stroke-width="1.1"/>
<path d="M1175.6,376 L1174.4,379.9" stroke="#000" stroke-width="1.1"/>
<path d="M1182,378.7 L1180.1,382.3" stroke="#000" stroke-width="1.1"/>
<path d="M1187.8,382.6 L1185.3,385.7" stroke="#000" stroke-width="1.1"/>
<path d="M1192.7,387.6 L1189.6,390.1" stroke="#000" stroke-width="1.1"/>
<path d="M1196.6,393.4 L1193.1,395.3" stroke="#000" stroke-width="1.1"/>
<path d="M1199.2,399.9 L1195.4,401" stroke="#000" stroke-width="1.1"/>
<path d="M1200.6,406.8 L1196.6,407.1" stroke="#000" stroke-width="1.1"/>
<path d="M1200.5,413.8 L1196.5,413.3" stroke="#000" stroke-width="1.1"/>
<path d="M1199.1,420.6 L1195.3,419.4" stroke="#000" stroke-width="1.1"/>
<path d="M1196.3,427 L1192.8,425.1" stroke="#000" stroke-width="1.1"/>
<path d="M1192.4,432.8 L1189.3,430.2" stroke="#000" stroke-width="1.1"/>
<circle cx="1242.2" cy="410" r="6.5" fill="none" stroke="#333" stroke-width="0.9"/>
<path d="M1215,432.8 L1218.1,430.2" stroke="#000" stroke-width="1.1"/>
<path d="M1211.1,427 L1214.6,425.1" stroke="#000" stroke-width="1.1"/>
<path d="M1208.3,420.6 L1212.1,419.4" stroke="#000" stroke-width="1.1"/>
<path d="M1206.9,413.8 L1210.9,413.3" stroke="#000" stroke-width="1.1"/>
<path d="M1206.8,406.8 L1210.8,407.1" stroke="#000" stroke-width="1.1"/>
<path d="M1208.2,399.9 L1212,401" stroke="#000" stroke-width="1.1"/>
<path d="M1210.8,393.4 L1214.3,395.3" stroke="#000" stroke-width="1.1"/>
<path d="M1214.7,387.6 L1217.8,390.1" stroke="#000" stroke-width="1.1"/>
<path d="M1219.6,382.6 L1222.1,385.7" stroke="#000" stroke-width="1.1"/>
<path d="M1225.4,378.7 L1227.3,382.3" stroke="#000" stroke-width="1.1"/>
<path d="M1231.8,376 L1233,379.9" stroke="#000" stroke-width="1.1"/>
<path d="M1238.7,374.7 L1239.1,378.7" stroke="#000" stroke-width="1.1"/>
<path d="M1245.7,374.7 L1245.3,378.7" stroke="#000" stroke-width="1.1"/>
<path d="M1252.6,376 L1251.4,379.9" stroke="#000" stroke-width="1.1"/>
<path d="M1259,378.7 L1257.1,382.3" stroke="#000" stroke-width="1.1"/>
<path d="M1264.8,382.6 L1262.3,385.7" stroke="#000" stroke-width="1.1"/>
<path d="M1269.7,387.6 L1266.6,390.1" stroke="#000" stroke-width="1.1"/>
<path d="M1273.6,393.4 L1270.1,395.3" stroke="#000" stroke-width="1.1"/>
<path d="M1276.2,399.9 L1272.4,401" stroke="#000" stroke-width="1.1"/>
<path d="M1277.6,406.8 L1273.6,407.1" stroke="#000" stroke-width="1.1"/>
<path d="M1277.5,413.8 L1273.5,413.3" stroke="#000" stroke-width="1.1"/>
<path d="M1276.1,420.6 L1272.3,419.4" stroke="#000" stroke-width="1.1"/>
<path d="M1273.3,427 L1269.8,425.1" stroke="#000" stroke-width="1.1"/>
<path d="M1269.4,432.8 L1266.3,430.2" stroke="#000" stroke-width="1.1"/>
<path d="M1194,437.5 Q1200,429 1202.9,428.7 Q1206,429 1211.7,437.5" fill="none" stroke="#333" stroke-width="0.9"/>
<path d="M1165.2,410 L1141,437.6" stroke="#000" stroke-width="2.2"/>
<path d="M1165.2,410 L1141,437.6" stroke="#fff" stroke-width="0.6"/>
<path d="M1242.2,410 L1219,436.7" stroke="#000" stroke-width="2.2"/>
<path d="M1242.2,410 L1219,436.7" stroke="#fff" stroke-width="0.6"/>
<path d="M1101,428 L1120,445.2" stroke="#000" stroke-width="2.2"/>
<path d="M1101,428 L1120,445.2" stroke="#fff" stroke-width="0.6"/>
<path d="M1281,428 L1301,445.2" stroke="#000" stroke-width="2.2"/>
<path d="M1281,428 L1301,445.2" stroke="#fff" stroke-width="0.6"/>
<circle cx="1101" cy="428" r="20" fill="none" stroke="#333" stroke-width="0.9"/>
<circle cx="1101" cy="428" r="4.8" fill="none" stroke="#333" stroke-width="0.9"/>
<path d="M1106.2,447.3 L1105.3,443.9" stroke="#000" stroke-width="1.3"/>
<path d="M1111,445.3 L1109.2,442.3" stroke="#000" stroke-width="1.3"/>
<path d="M1115.1,442.1 L1112.7,439.7" stroke="#000" stroke-width="1.3"/>
<path d="M1118.3,438 L1115.3,436.2" stroke="#000" stroke-width="1.3"/>
<path d="M1120.3,433.2 L1116.9,432.3" stroke="#000" stroke-width="1.3"/>
<path d="M1121,428 L1117.5,428" stroke="#000" stroke-width="1.3"/>
<path d="M1120.3,422.8 L1116.9,423.7" stroke="#000" stroke-width="1.3"/>
<path d="M1118.3,418 L1115.3,419.8" stroke="#000" stroke-width="1.3"/>
<path d="M1115.1,413.9 L1112.7,416.3" stroke="#000" stroke-width="1.3"/>
<path d="M1111,410.7 L1109.2,413.7" stroke="#000" stroke-width="1.3"/>
<circle cx="1281" cy="428" r="20" fill="none" stroke="#333" stroke-width="0.9"/>
<circle cx="1281" cy="428" r="4.8" fill="none" stroke="#333" stroke-width="0.9"/>
<path d="M1275.8,447.3 L1276.7,443.9" stroke="#000" stroke-width="1.3"/>
<path d="M1271,445.3 L1272.8,442.3" stroke="#000" stroke-width="1.3"/>
<path d="M1266.9,442.1 L1269.3,439.7" stroke="#000" stroke-width="1.3"/>
<path d="M1263.7,438 L1266.7,436.2" stroke="#000" stroke-width="1.3"/>
<path d="M1261.7,433.2 L1265.1,432.3" stroke="#000" stroke-width="1.3"/>
<path d="M1261,428 L1264.5,428" stroke="#000" stroke-width="1.3"/>
<path d="M1261.7,422.8 L1265.1,423.7" stroke="#000" stroke-width="1.3"/>
<path d="M1263.7,418 L1266.7,419.8" stroke="#000" stroke-width="1.3"/>
<path d="M1266.9,413.9 L1269.3,416.3" stroke="#000" stroke-width="1.3"/>
<path d="M1271,410.7 L1272.8,413.7" stroke="#000" stroke-width="1.3"/>
<circle cx="1133.1" cy="373.7" r="3.8" fill="none" stroke="#333" stroke-width="0.9"/>
<circle cx="1092.9" cy="395.3" r="3.8" fill="none" stroke="#333" stroke-width="0.9"/>
<circle cx="1104.7" cy="395.3" r="3.8" fill="none" stroke="#333" stroke-width="0.9"/>
<circle cx="1117.4" cy="394.3" r="3.8" fill="none" stroke="#333" stroke-width="0.9"/>
<circle cx="1086" cy="405.1" r="3.8" fill="none" stroke="#333" stroke-width="0.9"/>
<circle cx="1080.7" cy="416.9" r="3.8" fill="none" stroke="#333" stroke-width="0.9"/>
<circle cx="1274.3" cy="373.8" r="3.8" fill="none" stroke="#333" stroke-width="0.9"/>
<circle cx="1283.8" cy="382.4" r="3.8" fill="none" stroke="#333" stroke-width="0.9"/>
<circle cx="1289.5" cy="393.8" r="3.8" fill="none" stroke="#333" stroke-width="0.9"/>
<circle cx="1302.9" cy="394.8" r="3.8" fill="none" stroke="#333" stroke-width="0.9"/>
<circle cx="1314.3" cy="394.8" r="3.8" fill="none" stroke="#333" stroke-width="0.9"/>
<circle cx="1321.9" cy="404.3" r="3.8" fill="none" stroke="#333" stroke-width="0.9"/>
<circle cx="1326.7" cy="416.7" r="3.8" fill="none" stroke="#333" stroke-width="0.9"/>
<rect x="1188.6" y="362.4" width="30.4" height="8.6" rx="3" fill="none" stroke="#333" stroke-width="0.9"/>
<path d="M1170.5,366.5 L1175.5,362.5 L1175.5,364.5 L1181,364.5 L1181,368.5 L1175.5,368.5 L1175.5,370.5 Z M1237,366.5 L1232,362.5 L1232,364.5 L1226.5,364.5 L1226.5,368.5 L1232,368.5 L1232,370.5 Z" fill="none" stroke="#333" stroke-width="0.9"/>
<path d="M1100.3,466.1C1103.2,463.7 1107.7,455.8 1117.4,451.7C1127.1,447.6 1144.3,443.6 1158.5,441.4C1172.7,439.2 1187.5,438.7 1202.3,438.7C1217.1,438.7 1233.1,439.6 1247.5,441.4C1261.9,443.2 1278.5,445.6 1288.6,449.7C1298.6,453.8 1304.6,463.4 1307.8,466.1" fill="none" stroke="#000" stroke-width="2"/>
<path d="M1114,500C1114.2,495 1113.7,477 1115,470C1116.3,463 1117.8,461.6 1122,458C1126.2,454.4 1126.7,451 1140,448.5C1153.3,446 1181.2,443 1202,443C1222.8,443 1251.2,446 1265,448.5C1278.8,451 1280.3,454.4 1285,458C1289.7,461.6 1291.3,463 1293,470C1294.7,477 1294.7,495 1295,500" fill="none" stroke="#333" stroke-width="0.9"/>
<path d="M1097.1,491C1097.2,497.5 1097.3,519 1097.5,530C1097.7,541 1097.1,550.2 1098.2,556.7C1099.3,563.2 1099.9,566.5 1104.3,569.2C1108.7,571.9 1119.1,567.4 1124.6,572.9C1130.1,578.4 1133.7,596 1137.4,602.3C1141.1,608.6 1145.1,609.1 1146.6,610.5 L1279,610.5 C1280.8,609.1 1286.9,607.3 1290,602.3C1293.1,597.2 1294.1,585.7 1297.4,580.2C1300.7,574.7 1307.4,577.6 1310,569.2C1312.6,560.8 1312.5,543.8 1313,530C1313.5,516.2 1313.2,493.8 1313.2,486.6" fill="none" stroke="#000" stroke-width="2"/>
<path d="M1114,500 L1114,530 Q1114,543.8 1128,543.8 L1281,543.8 Q1295,543.8 1295,530 L1295,500" fill="none" stroke="#333" stroke-width="0.9"/>
<path d="M1114,543.8 L1102.4,560.5M1295,543.8 L1307,565" fill="none" stroke="#333" stroke-width="0.9"/>
<path d="M1103,545 L1113,525M1303,545 L1293,525" fill="none" stroke="#333" stroke-width="0.9"/>
<path d="M1143.5,572.5 L1143.5,524.8 L1132.2,520 L1132.2,473 Q1132.2,467.3 1140,467.3 L1265,467.3 Q1272.4,467.3 1272.4,475 L1272.4,508 L1261.5,512 L1261.1,572.5 Z" fill="none" stroke="#000" stroke-width="2"/>
<path d="M1132.2,508 L1143.5,513M1143.5,513 L1143.5,524.8" fill="none" stroke="#000" stroke-width="1.6"/>
<path d="M1149,466.5 L1149,461.3 Q1165,457 1180.4,456.5 L1222.9,456.5 Q1240,457 1256.4,461.3 L1256.4,466.5" fill="none" stroke="#000" stroke-width="1.6"/>
<path d="M1143.5,559 L1261,559" fill="none" stroke="#333" stroke-width="0.9"/>
<circle cx="1202.3" cy="509.2" r="48" fill="none" stroke="#000" stroke-width="2"/>
<circle cx="1202.3" cy="511" r="50" fill="none" stroke="#333" stroke-width="0.9"/>
<rect x="1191" y="464" width="22.6" height="21.4" rx="0" fill="none" stroke="#000" stroke-width="1.6"/>
<circle cx="1202.3" cy="507" r="22" fill="none" stroke="#333" stroke-width="0.9"/>
<circle cx="1202.3" cy="507" r="24" fill="none" stroke="#333" stroke-width="0.9"/>
<circle cx="1202.3" cy="513.4" r="15.3" fill="none" stroke="#000" stroke-width="2"/>
<ellipse cx="1202.3" cy="518" rx="12" ry="7" fill="none" stroke="#000" stroke-width="1.6" transform="rotate(0 1202.3 518)"/>
<path d="M1132.2,483C1126.8,481 1110.9,475.7 1100,471C1089.1,466.3 1075.3,458.6 1067,454.6C1058.7,450.6 1055.3,448.9 1050,447C1044.7,445.1 1039.2,443.7 1035,443.5C1030.8,443.3 1027.3,444.1 1025,446C1022.7,447.9 1020.8,452 1021,455C1021.2,458 1022.7,461.4 1026,464C1029.3,466.6 1033.7,468.1 1041,470.8C1048.3,473.5 1060.2,477.1 1070,480C1079.8,482.9 1089.6,485.7 1100,488.5C1110.4,491.3 1126.8,495.3 1132.2,496.7" fill="none" stroke="#000" stroke-width="2"/>
<path d="M1065,455.7 L1058.4,476.2" fill="none" stroke="#000" stroke-width="2"/>
<path d="M1050,451 L1043,468 L1046,470 L1053,453 Z" fill="none" stroke="#000" stroke-width="1.6"/>
<path d="M1029,447C1028.3,448.3 1025.2,452.5 1025,455C1024.8,457.5 1027.5,460.8 1028,462" fill="none" stroke="#666" stroke-width="1.2"/>
<path d="M1273.6,480.9C1279.7,478.6 1298.1,472 1310,467C1321.9,462 1336.3,454.8 1345,451C1353.7,447.2 1357,445.2 1362,444.5C1367,443.8 1372.2,444.6 1375,446.5C1377.8,448.4 1379.5,452.9 1379,456C1378.5,459.1 1375.7,462.7 1372,465C1368.3,467.3 1364,467.7 1357,470C1350,472.3 1339.5,475.8 1330,479C1320.5,482.2 1309.4,486.2 1300,489C1290.6,491.8 1278,494.5 1273.6,495.6" fill="none" stroke="#000" stroke-width="2"/>
<path d="M1350,449 L1357,469" fill="none" stroke="#000" stroke-width="2"/>
<path d="M1370,447C1370.8,448.3 1374.8,452.2 1375,455C1375.2,457.8 1371.7,462.5 1371,464" fill="none" stroke="#666" stroke-width="1.2"/>
<path d="M1262,513 L1267.9,512.6 L1290.5,512 M1262,543 L1290.5,540.9" fill="none" stroke="#000" stroke-width="2"/>
<path d="M1267.9,512.6 L1267.9,541" fill="none" stroke="#000" stroke-width="1.6"/>
<path d="M1290.5,512 L1322,509.5 Q1342,510 1350,514 Q1357,525 1350,537 Q1342,542 1322,542.5 L1290.5,540.9" fill="none" stroke="#000" stroke-width="2"/>
<path d="M1324,511C1325.3,512.2 1328.7,516.5 1332,518C1335.3,519.5 1342,519.7 1344,520M1324,541C1325.3,540 1328.7,536.5 1332,535C1335.3,533.5 1342,532.5 1344,532" fill="none" stroke="#000" stroke-width="1.6"/>
<ellipse cx="1348.5" cy="525.5" rx="4.5" ry="11" fill="none" stroke="#333" stroke-width="0.9" transform="rotate(0 1348.5 525.5)"/>
<rect x="1316.5" y="521" width="8" height="11.5" rx="1.5" fill="none" stroke="#000" stroke-width="1.6"/>
<path d="M1300,522C1300.8,521.3 1303.3,518.8 1305,518C1306.7,517.2 1309.2,517.2 1310,517" fill="none" stroke="#333" stroke-width="0.9"/>
<path d="M1435,175.6C1435.8,191.9 1439.5,248.1 1439.9,273.6C1440.3,299.1 1438.8,315.7 1437.6,328.7C1436.4,341.7 1435.8,346.6 1432.8,351.4C1429.8,356.2 1422,356.3 1419.8,357.3" fill="none" stroke="#000" stroke-width="2"/>
<path d="M1419.8,357.3C1409.8,355.9 1379.5,351.1 1360,349C1340.5,346.9 1312.5,345.2 1303,344.5" fill="none" stroke="#000" stroke-width="2"/>
<path d="M1471,175.6C1471.5,193 1472.9,245.3 1474,280C1475.1,314.7 1476.9,366.6 1477.5,383.9" fill="none" stroke="#333" stroke-width="0.9"/>
<path d="M1497.7,175.6C1498.2,195.7 1500.3,266.2 1500.9,296.3C1501.5,326.4 1498.8,341.2 1501.5,356C1504.2,370.8 1512.9,375.2 1517.1,385C1521.3,394.8 1524.5,402.5 1526.5,415C1528.5,427.5 1527.1,445.8 1529,460C1530.9,474.2 1535.3,487.8 1538,500C1540.7,512.2 1544.2,521.3 1545,533C1545.8,544.7 1543.7,558.8 1543,570C1542.3,581.2 1541.2,595 1540.8,600 L1496.7,806.2" fill="none" stroke="#000" stroke-width="2"/>
<path d="M1501.5,361.2C1500.9,368.2 1499,386.9 1497.7,403.4C1496.4,419.9 1495.8,441.1 1493.8,460C1491.8,478.9 1486.8,498.7 1486,517C1485.2,535.3 1488.1,556.2 1489,570C1489.9,583.8 1490.7,590.7 1491.5,600C1492.3,609.3 1494.9,609.6 1494.1,626C1493.2,642.4 1485.5,680.4 1486.4,698.6C1487.3,716.8 1496.9,723.3 1499.3,735C1501.7,746.7 1501.1,756.7 1500.6,768.6C1500.1,780.5 1496.9,799.9 1496.2,806.2" fill="none" stroke="#000" stroke-width="2"/>
<path d="M1419.8,357.3C1422.5,359.6 1429.3,366.9 1436,370.9C1442.7,374.8 1453.5,378.5 1460,381C1466.5,383.5 1472.5,385.2 1475,386 L1481.4,432.5" fill="none" stroke="#000" stroke-width="2"/>
<rect x="1424.2" y="386.8" width="7.4" height="23.5" rx="3.7" fill="none" stroke="#000" stroke-width="1.6" transform="rotate(-5 1427.9 398.5)"/>
<rect x="1438.1" y="388.9" width="7.4" height="23.5" rx="3.7" fill="none" stroke="#000" stroke-width="1.6" transform="rotate(-5 1441.8 400.7)"/>
<rect x="1451.8" y="390.9" width="7.4" height="23.5" rx="3.7" fill="none" stroke="#000" stroke-width="1.6" transform="rotate(-5 1455.5 402.7)"/>
<path d="M1350,387.1C1355.7,392 1371.3,409 1384,416.3C1396.7,423.6 1410.6,428 1426.3,431C1442,434 1469.5,433.7 1478.2,434.2" fill="none" stroke="#333" stroke-width="0.9"/>
<path d="M1481.4,432.5 Q1483,436 1483,440 L1478.2,530.3 Q1477,538.4 1468,538.4" fill="none" stroke="#000" stroke-width="2"/>
<path d="M1488,468.7 L1484.5,470.5 M1484.5,470 L1482.5,600 L1481.7,683 Q1481,690.8 1473,690.8 L1469.5,690.8" fill="none" stroke="#000" stroke-width="2"/>
<path d="M1382,443C1388.3,443.2 1407.1,443.5 1420,444C1432.9,444.5 1451.8,444.6 1459.3,445.9C1466.8,447.2 1464.5,447.1 1465,452C1465.5,456.9 1463.5,467.1 1462,475C1460.5,482.9 1459.9,492.5 1456.2,499.2C1452.5,505.9 1446,511.9 1440,515C1434,518.1 1429.3,517.5 1420,518C1410.7,518.5 1394,519 1384,518C1374,517 1365.5,515.3 1360,512C1354.5,508.7 1352.8,502.7 1351,498C1349.2,493.3 1349.8,486 1349.5,483.6" fill="none" stroke="#000" stroke-width="2"/>
<path d="M1359.2,479.6C1359.8,483.1 1358.4,495.6 1362.7,500.3C1367,505.1 1373.7,506.8 1385.2,508.1C1396.7,509.4 1423,509.4 1431.9,508.1C1440.8,506.8 1437.1,505.8 1438.8,500.3C1440.5,494.8 1441,482.2 1442,475C1443,467.8 1444.8,461.3 1444.8,457C1444.8,452.7 1451.6,450.9 1442.2,449.3C1432.8,447.7 1397.5,447.9 1388.6,447.6" fill="none" stroke="#000" stroke-width="1.6"/>
<path d="M1388.6,451.9 L1436.5,451.9" fill="none" stroke="#333" stroke-width="0.9"/>
<path d="M1436.5,451.9 A3.9,3.9 0 0 1 1436.5,459.7 L1388.6,459.7" fill="none" stroke="#000" stroke-width="1.6"/>
<path d="M1388.6,463.1 L1433.9,463.1" fill="none" stroke="#333" stroke-width="0.9"/>
<path d="M1433.9,463.1 A3.9,3.9 0 0 1 1433.9,470.9 L1371.3,470.9" fill="none" stroke="#000" stroke-width="1.6"/>
<path d="M1366.1,474.4 L1430.5,474.4" fill="none" stroke="#333" stroke-width="0.9"/>
<path d="M1430.5,474.4 A4.3,4.3 0 0 1 1430.5,483 L1366.1,483" fill="none" stroke="#000" stroke-width="1.6"/>
<path d="M1366.1,486.5 L1429.6,486.5" fill="none" stroke="#333" stroke-width="0.9"/>
<path d="M1429.6,486.5 A3.9,3.9 0 0 1 1429.6,494.3 L1366.1,494.3" fill="none" stroke="#000" stroke-width="1.6"/>
<path d="M1373,498.6 L1429.6,498.6" fill="none" stroke="#333" stroke-width="0.9"/>
<path d="M1429.6,498.6 A3.4,3.4 0 0 1 1429.6,505.5 L1373,505.5" fill="none" stroke="#000" stroke-width="1.6"/>
<rect x="1393.8" y="475.8" width="13" height="5.8" rx="0" fill="none" stroke="#000" stroke-width="1.6"/>
<rect x="1447.4" y="462.2" width="6.5" height="34" rx="3.2" fill="none" stroke="#000" stroke-width="1.6"/>
<path d="M1312.7,485 L1314.3,601.7 Q1315,606.6 1322,606.6 L1466,606.6 Q1471.5,606 1471.7,600 L1476.6,545 Q1477,538.4 1470,538.4 L1322,538.4" fill="none" stroke="#000" stroke-width="2"/>
<rect x="1343.5" y="546.5" width="22.7" height="23.5" rx="3" fill="none" stroke="#000" stroke-width="1.6"/>
<rect x="1374.4" y="546.5" width="22.6" height="23.5" rx="3" fill="none" stroke="#000" stroke-width="1.6"/>
<circle cx="1385.7" cy="558.2" r="6.2" fill="none" stroke="#333" stroke-width="0.9"/>
<rect x="1406.8" y="546.5" width="22.7" height="43.8" rx="3" fill="none" stroke="#000" stroke-width="1.6"/>
<rect x="1413.3" y="566" width="11.4" height="18.8" rx="0" fill="none" stroke="#333" stroke-width="0.9"/>
<rect x="1440" y="546.5" width="23.6" height="43.8" rx="3" fill="none" stroke="#000" stroke-width="1.6"/>
<rect x="1447.4" y="566" width="10.6" height="19.5" rx="0" fill="none" stroke="#333" stroke-width="0.9"/>
<path d="M1117.2,604.1 L1084.1,604.1 Q1061.1,606 1061.1,625 L1060.2,655.6 Q1061,678.6 1084.1,678.6 L1458,678.3 Q1466.8,678 1467,670 L1469.5,615 Q1470,608.2 1463,608.2 L1310,606.6" fill="none" stroke="#000" stroke-width="2"/>
<path d="M1045.5,632.6C1046.6,627.2 1050,612.1 1052,600C1054,587.9 1056.6,566.7 1057.5,560" fill="none" stroke="#333" stroke-width="0.9"/>
<rect x="1158.6" y="629" width="109.4" height="47.2" rx="0" fill="none" stroke="#666" stroke-width="2"/>
<rect x="1160.5" y="631" width="105.5" height="43.2" rx="0" fill="none" stroke="#333" stroke-width="0.9"/>
<path d="M1186.1,630 L1186.1,675.5" fill="none" stroke="#777" stroke-width="2"/>
<path d="M1212.8,630 L1212.8,675.5" fill="none" stroke="#777" stroke-width="2"/>
<path d="M1240.4,630 L1240.4,675.5" fill="none" stroke="#777" stroke-width="2"/>
<path d="M1160.4,621.6 L1265.2,621.6" fill="none" stroke="#000" stroke-width="1.6"/>
<path d="M1160.4,621.6 L1173,636M1265.2,621.6 L1252,636" fill="none" stroke="#000" stroke-width="1.6"/>
<path d="M1265.2,612 L1265.2,629" stroke="#000" stroke-width="2.6"/>
<path d="M1145,617 L1152,617 L1152,620 L1160.4,620 L1160.4,638 L1146,638 L1141,632 L1141,624 Z" fill="none" stroke="#000" stroke-width="1.6"/>
<circle cx="1150" cy="628.4" r="3" fill="none" stroke="#333" stroke-width="0.9"/>
<path d="M1281,617 L1274,617 L1274,620 L1267,620 L1267,638 L1281,638 L1285.4,632 L1285.4,624 Z" fill="none" stroke="#000" stroke-width="1.6"/>
<circle cx="1277.5" cy="628.4" r="3" fill="none" stroke="#333" stroke-width="0.9"/>
<path d="M534,503.7C535.8,504.1 542.3,501.6 545,506C547.7,510.4 548.5,524 550.3,530C552.1,536 551.9,539.5 556,542C560.1,544.5 564.3,544.3 575,545C585.7,545.7 601.3,545 620,546C638.7,547 667.7,548.5 687,551C706.3,553.5 727.8,559.3 736,561" fill="none" stroke="#1c1886" stroke-width="4" stroke-linecap="round" stroke-linejoin="round"/>
<path d="M458.5,553C452.1,553.8 430.6,555.8 420,558C409.4,560.2 399.7,562.5 394.6,566C389.6,569.5 387,573.9 389.7,579C392.4,584.1 399.2,592.2 410.8,596.8C422.4,601.4 445.5,606.5 459.5,606.5C473.5,606.5 484.8,604.6 495,596.8C505.2,589 511.2,568.1 521,559.5C530.8,550.9 537,547.2 553.5,545C570,542.8 597.2,545.3 620,546.5C642.8,547.7 670.7,549.6 690,552C709.3,554.4 724.6,560 736,561C747.4,562 750.5,560.8 758.6,557.8C766.7,554.8 777.5,550.5 784.5,543.2C791.5,535.9 794.2,522.9 800.7,514C807.2,505.1 815.2,494.6 823.4,489.7C831.6,484.8 845.6,485.6 850,484.8" fill="none" stroke="#1c1886" stroke-width="4" stroke-linecap="round" stroke-linejoin="round"/>
<path d="M684.7,523.7C686.8,524.6 694.1,527.1 697,529C699.9,530.9 703.4,532.9 701.8,535C700.2,537.1 697.5,540.2 687.2,541.6C676.9,543 656.2,543.2 640,543.5C623.8,543.8 604.5,543.5 590,543.5C575.5,543.5 559.2,543.5 553,543.5" fill="none" stroke="#1c1886" stroke-width="4" stroke-linecap="round" stroke-linejoin="round"/>
<path d="M735.9,561C735.8,567.5 735.3,585.7 735,600C734.7,614.3 734,634.3 734.2,647C734.4,659.7 735,670.3 736,676C737,681.7 737.7,680.8 740,681C742.3,681.2 747.5,678.5 750,677C752.5,675.5 754.4,672.8 755.3,672" fill="none" stroke="#1c1886" stroke-width="4" stroke-linecap="round" stroke-linejoin="round"/>
<rect x="500.7" y="495.6" width="33.3" height="17.8" rx="0" fill="none" stroke="#1c1886" stroke-width="2"/>
<rect x="458.5" y="544" width="33.5" height="18" rx="0" fill="none" stroke="#1c1886" stroke-width="2"/>
<rect x="658.7" y="517.2" width="26" height="13.7" rx="0" fill="none" stroke="#1c1886" stroke-width="2"/>
<rect x="752.9" y="645.9" width="14" height="26" fill="none" stroke="#1c1886" stroke-width="2" transform="rotate(15 759.9 658.9)"/>
<path d="M915,378.9C909,379.3 887.5,379.3 879.2,381.5C870.9,383.7 868.5,387.9 865.3,391.9C862.1,395.9 862.1,401.9 860.1,405.7C858.1,409.4 856.4,412.1 853.2,414.4C850,416.7 844.7,415.8 841.1,419.5C837.5,423.2 833.3,429.9 831.6,436.8C829.9,443.7 830.1,454.1 830.8,461C831.5,467.9 832.5,474.6 836,478.3C839.5,482.1 840.8,482.4 851.5,483.5C862.2,484.6 884.1,484.7 900,485C915.9,485.3 929.9,485.3 946.6,485.3C963.3,485.3 986.1,485.1 1000,485C1013.9,484.9 1020.8,485.3 1030,485C1039.2,484.7 1048.2,484.8 1055,483.2C1061.8,481.6 1067.2,480.3 1071,475.2C1074.8,470.1 1071.1,460.1 1077.9,452.6C1084.7,445.1 1099.1,436.6 1111.8,430C1124.5,423.4 1140.9,416.4 1154.3,412.9C1167.7,409.4 1186.1,409.6 1192.4,409" fill="none" stroke="#1c1886" stroke-width="4" stroke-linecap="round" stroke-linejoin="round"/>
<path d="M853.2,414.4C857.5,414.4 867.4,413.7 879.2,414.4C891,415.1 916.4,418 923.8,418.7" fill="none" stroke="#1c1886" stroke-width="4" stroke-linecap="round" stroke-linejoin="round"/>
<path d="M849,486.5C848.3,489 844.8,495.9 844.6,501.6C844.4,507.4 844.6,516.3 847.8,521C851,525.7 854.1,528.4 864,529.7C873.9,531 897.9,527.6 907.3,528.7C916.7,529.8 917.9,534.2 920.3,536.2C922.6,538.2 921.2,539.9 921.4,540.6" fill="none" stroke="#1c1886" stroke-width="4" stroke-linecap="round" stroke-linejoin="round"/>
<path d="M946.6,485.3C955.5,485.6 986.1,486.1 1000,487C1013.9,487.9 1022.8,489.3 1030,491C1037.2,492.7 1039.7,493.8 1043,497C1046.3,500.2 1048.6,504 1050,510C1051.4,516 1051.8,523.7 1051.3,533C1050.8,542.3 1048.9,554 1047,566C1045.1,578 1042.7,592.7 1040,605C1037.3,617.3 1034,626.7 1031,640C1028,653.3 1024.8,670.4 1022,685C1019.2,699.6 1015.5,710.1 1014.3,727.6C1013.1,745.1 1015.2,776.9 1015,790C1014.8,803.1 1014.7,802.3 1013,806C1011.3,809.7 1009.7,810.4 1005,812C1000.3,813.6 994.8,814.2 984.6,815.5C974.4,816.8 950.8,818.8 944,819.5" fill="none" stroke="#1c1886" stroke-width="4" stroke-linecap="round" stroke-linejoin="round"/>
<path d="M1030,491C1033.3,492.2 1044.2,494.5 1050,498C1055.8,501.5 1060.2,506.7 1065,512C1069.8,517.3 1075.3,523.1 1079,530C1082.7,536.9 1085.1,544.3 1087.3,553.5C1089.5,562.7 1090.7,573.2 1092,585C1093.3,596.8 1093,613.1 1095.1,624.3C1097.1,635.4 1099.7,643.3 1104.3,651.9C1108.9,660.5 1112,669.5 1122.7,675.8C1133.4,682.1 1157.1,687.5 1168.7,689.6C1180.3,691.8 1187.1,691 1192.6,688.7C1198.1,686.4 1200.3,677.9 1201.8,675.8" fill="none" stroke="#1c1886" stroke-width="4" stroke-linecap="round" stroke-linejoin="round"/>
<path d="M1095,608.7C1098.1,609.2 1100.3,611.8 1113.5,611.5C1126.7,611.2 1148.2,610 1174.2,606.9C1200.2,603.8 1245.1,595.3 1269.8,593.1C1294.5,590.9 1309.9,592.2 1322.4,593.6C1334.9,595 1339.8,597.1 1345,601.7C1350.2,606.3 1351.9,618 1353.3,621.2" fill="none" stroke="#1c1886" stroke-width="4" stroke-linecap="round" stroke-linejoin="round"/>
<path d="M1174.2,607.8 L1174.2,635.4" fill="none" stroke="#1c1886" stroke-width="4" stroke-linecap="round" stroke-linejoin="round"/>
<path d="M975.4,604.3C977.4,605.1 983.9,606.8 987.5,609C991.1,611.2 993.4,611.4 997,617.4C1000.6,623.4 1006.4,636 1009.4,644.8C1012.4,653.6 1013.4,661.6 1015,670C1016.6,678.4 1018.3,691.2 1019,695.4" fill="none" stroke="#1c1886" stroke-width="4" stroke-linecap="round" stroke-linejoin="round"/>
<path d="M995.4,827.6C996.8,827.8 999.4,826.9 1003.5,829C1007.6,831.1 1016,836.6 1020,840C1024,843.4 1025.8,844.2 1027.8,849.2C1029.8,854.2 1030.6,862.4 1032,870C1033.4,877.6 1035.3,890.8 1036,895" fill="none" stroke="#1c1886" stroke-width="4" stroke-linecap="round" stroke-linejoin="round"/>
<path d="M1026.5,791 L1036,895" fill="none" stroke="#1c1886" stroke-width="4" stroke-linecap="round" stroke-linejoin="round"/>
<path d="M944,815.5 L984.6,819.5 L944,824 Z" fill="#1c1886"/>
<rect x="915" y="371.6" width="26.4" height="13.7" rx="0" fill="none" stroke="#1c1886" stroke-width="2"/>
<rect x="923.8" y="410.6" width="23.7" height="12.7" rx="0" fill="none" stroke="#1c1886" stroke-width="2"/>
<rect x="896.5" y="538.8" width="46.5" height="13" rx="0" fill="none" stroke="#1c1886" stroke-width="2"/>
<rect x="949.5" y="597.9" width="25.9" height="15.1" rx="0" fill="none" stroke="#1c1886" stroke-width="2"/>
<rect x="1189.5" y="399.5" width="33.4" height="15.8" rx="0" fill="none" stroke="#1c1886" stroke-width="2"/>
<rect x="1163.5" y="635.4" width="19" height="40" rx="0" fill="none" stroke="#1c1886" stroke-width="2"/>
<rect x="1191.7" y="635.4" width="19.3" height="40" rx="0" fill="none" stroke="#1c1886" stroke-width="2"/>
<rect x="1342" y="619.5" width="23.3" height="23.7" rx="0" fill="none" stroke="#1c1886" stroke-width="2"/>
<circle cx="946.6" cy="485.3" r="4.5" fill="#fff" stroke="#1c1886" stroke-width="3.5"/>
<circle cx="937.3" cy="821.6" r="6.8" fill="#b8835e" stroke="#1c1886" stroke-width="2"/>
<path d="M910.3,831.6 L964.3,831.6" stroke="#1c1886" stroke-width="1.6"/>
<path d="M910.3,853.2 L930.5,833" stroke="#1c1886" stroke-width="1"/>
<path d="M925.1,853.2 L945.4,833" stroke="#1c1886" stroke-width="1"/>
<path d="M938.6,853.2 L958.9,833" stroke="#1c1886" stroke-width="1"/>
<path d="M952.2,853.2 L963,843.8" stroke="#1c1886" stroke-width="1"/>
<path d="M910.3,839.7 L917,833" stroke="#1c1886" stroke-width="1"/>
<path d="M1019.7,760 L1121.4,760.8" fill="none" stroke="#333" stroke-width="0.9"/>
<path d="M960.3,828 L1131,808.3" fill="none" stroke="#333" stroke-width="0.9"/>
<path d="M1038.6,874.9 L1123.1,862.5" fill="none" stroke="#333" stroke-width="0.9"/>
<rect x="1127.3" y="786.5" width="113.3" height="36.7" rx="0" fill="none" stroke="#b87a56" stroke-width="4.8"/>
<text x="1125" y="772.8" font-size="24.5" font-family="Liberation Sans" fill="#000" stroke="#fff" stroke-width="0.3" paint-order="normal" textLength="88.5" lengthAdjust="spacingAndGlyphs">50&#160;&#160;P/B</text>
<text x="1146" y="814.7" font-size="24.5" font-family="Liberation Sans" fill="#000" stroke="#fff" stroke-width="0.3" paint-order="normal" textLength="58.5" lengthAdjust="spacingAndGlyphs">MC30</text>
<text x="1131.5" y="866" font-size="24.5" font-family="Liberation Sans" fill="#000" stroke="#fff" stroke-width="0.3" paint-order="normal" textLength="88.5" lengthAdjust="spacingAndGlyphs">46&#160;&#160;&#160;HAB</text>
<text x="1405" y="900" font-size="25" font-family="Liberation Serif" fill="#000" stroke="#000" stroke-width="0.2" textLength="113" lengthAdjust="spacingAndGlyphs">d3fl38mi</text>
</svg>
</body></html>
